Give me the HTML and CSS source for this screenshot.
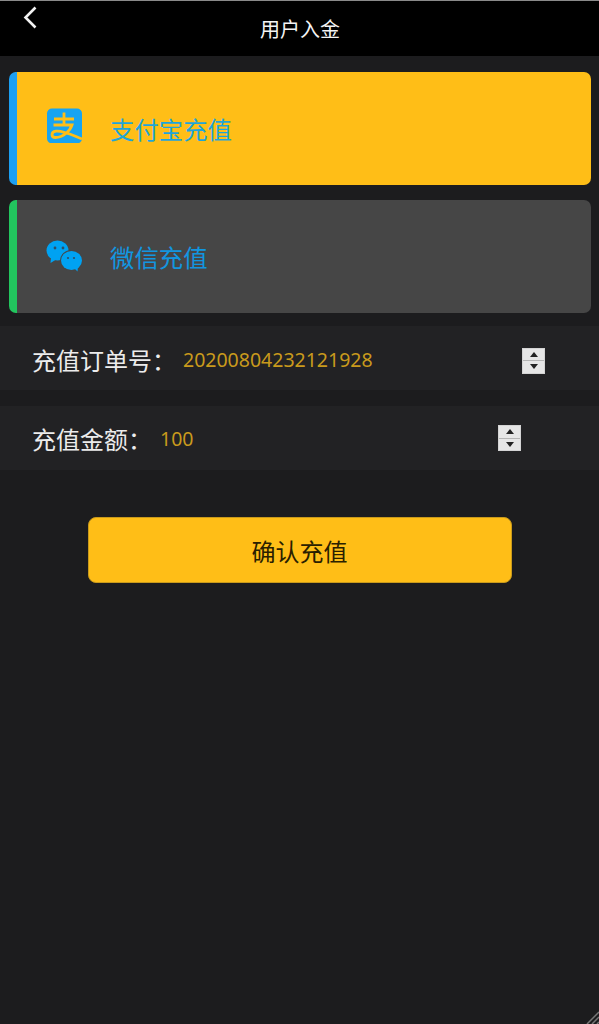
FILE: index.html
```html
<!DOCTYPE html>
<html lang="zh-CN">
<head>
    <meta charset="UTF-8">
    <title>用户入金</title>
    <link rel="stylesheet" href="styles.css">
</head>
<body>
<div class="header">
    <a class="back" href="#">
        <svg width="16" height="24" viewBox="0 0 16 24">
            <path d="M13.5 2.5 L3.5 12.5 L13.5 22.5" fill="none" stroke="#f2f2f2" stroke-width="2.6"/>
        </svg>
    </a>
    <h1 class="title">用户入金</h1>
</div>

<div class="pay-list">
    <div class="pay-card pay-alipay">
        <svg class="pay-icon" width="36" height="36" viewBox="0 0 36 36">
            <rect x="1" y="1.5" width="35" height="35" rx="5" fill="#17a4f2"/>
            <path d="M8 12 H28 M18 5.5 V18 M7.5 18 H26 C24 24 17 30.5 9.5 30.5 C5 30.5 4.5 25 10 24.2 C17 23.4 26 28 36 32" fill="none" stroke="#ffbe17" stroke-width="2.8"/>
        </svg>
        <span class="pay-name">支付宝充值</span>
    </div>
    <div class="pay-card pay-wechat">
        <svg class="pay-icon" width="36" height="36" viewBox="0 0 36 36">
            <ellipse cx="11.5" cy="11.5" rx="11" ry="10" fill="#00a2f2"/>
            <path d="M5 18 L4.5 24 L11 20 Z" fill="#00a2f2"/>
            <ellipse cx="25.5" cy="21.5" rx="11.5" ry="10.5" fill="#464646"/>
            <ellipse cx="25.5" cy="21.5" rx="10.5" ry="9.5" fill="#00a2f2"/>
            <path d="M28 29 L31.5 32.5 L32 27 Z" fill="#00a2f2"/>
            <circle cx="9" cy="9" r="1.4" fill="#2d4f66"/>
            <circle cx="17" cy="9" r="1.4" fill="#2d4f66"/>
            <circle cx="22" cy="19" r="1.1" fill="#2d4f66"/>
            <circle cx="28" cy="19" r="1.1" fill="#2d4f66"/>
        </svg>
        <span class="pay-name">微信充值</span>
    </div>
</div>

<div class="form-row order-row">
    <label class="form-label">充值订单号：</label>
    <div class="form-value">
        <span>20200804232121928</span>
        <span class="spinner"><i class="arrow-up"></i><i class="arrow-down"></i></span>
    </div>
</div>
<div class="form-row amount-row">
    <label class="form-label">充值金额：</label>
    <div class="form-value">
        <span>100</span>
        <span class="spinner"><i class="arrow-up"></i><i class="arrow-down"></i></span>
    </div>
</div>

<div class="submit-wrap">
    <button class="submit-btn" type="button">确认充值</button>
</div>

<svg class="grip" width="14" height="14" viewBox="0 0 14 14">
    <path d="M14 2 L2 14 M14 7 L7 14 M14 12 L12 14" stroke="#777" stroke-width="1.5"/>
</svg>
</body>
</html>
```

FILE: styles.css
```css
html, body {
    height: 100%;
}

body {
    margin: 0;
    background-color: #1c1c1e;
    font-family: "Noto Sans", "Noto Sans CJK SC", sans-serif;
    overflow: hidden;
}

.header {
    display: flex;
    justify-content: center;
    height: 55px;
    background-color: #000;
    border-top: 1px solid #8a8a8a;
    position: relative;
}

.back {
    position: absolute;
    left: 22px;
    top: 4px;
}

.title {
    margin: 0;
    padding: 14px 0 0 1px;
    font-size: 20px;
    line-height: 30px;
    font-weight: 400;
    color: #f4f4f4;
}

.pay-list {
    display: flex;
    flex-direction: column;
    gap: 15px;
    padding: 16px 8px 13px 9px;
}

.pay-card {
    display: flex;
    align-items: center;
    height: 113px;
    box-sizing: border-box;
    padding-left: 29px;
    border-radius: 7px;
    border-left: 8px solid;
}

.pay-alipay {
    background-color: #ffbe17;
    border-left-color: #1c9ff2;
}

.pay-wechat {
    background-color: #464646;
    border-left-color: #22c55e;
}

.pay-alipay .pay-icon {
    margin-top: -8px;
}

.pay-name {
    margin-left: 28px;
    font-size: 24.4px;
    color: #1ea5d8;
}

.pay-wechat .pay-name {
    color: #1296e0;
}

.form-row {
    display: flex;
    align-items: center;
    height: 64px;
    box-sizing: border-box;
    margin-bottom: 16px;
    padding-left: 32px;
    background-color: #222224;
}

.order-row {
    padding-top: 2px;
}

.order-row .spinner {
    margin-top: 3px;
}

.amount-row .form-value {
    width: 361px;
    margin-left: 8px;
}

.form-label {
    font-size: 24px;
    color: #ececec;
}

.form-value {
    display: flex;
    align-items: center;
    justify-content: space-between;
    width: 362px;
    margin-left: 7px;
    font-size: 19.5px;
    color: #c99a1c;
}

.spinner {
    display: flex;
    flex-direction: column;
    box-sizing: border-box;
    width: 23px;
    height: 26px;
    border: 1px solid #d4d4d4;
    background-color: #e6e6e6;
}

.spinner i {
    flex: 1;
    display: flex;
    align-items: center;
    justify-content: center;
}

.arrow-up {
    border-bottom: 1px solid #b4b4b4;
}

.arrow-up::after {
    content: "";
    border: 4px solid transparent;
    border-top: 0;
    border-bottom: 5px solid #222;
}

.arrow-down::after {
    content: "";
    border: 4px solid transparent;
    border-bottom: 0;
    border-top: 5px solid #222;
}

.submit-wrap {
    display: flex;
    justify-content: center;
    padding-top: 31px;
}

.submit-btn {
    width: 424px;
    height: 66px;
    border: 1px solid #c99a1c;
    border-radius: 8px;
    background-color: #ffbe17;
    font-family: inherit;
    font-size: 24px;
    color: #2a2000;
}

.grip {
    position: fixed;
    right: 0;
    bottom: 0;
}
```
